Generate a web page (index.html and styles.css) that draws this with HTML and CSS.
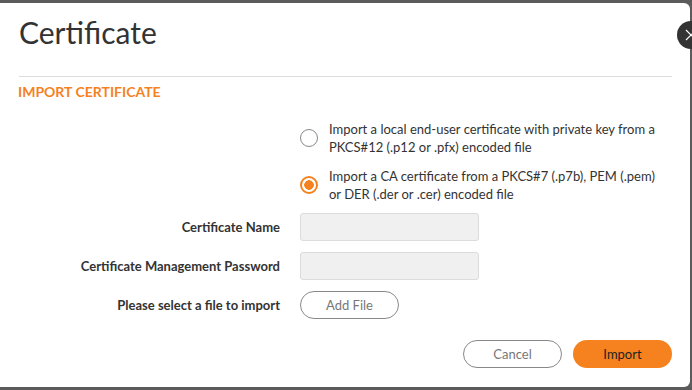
FILE: index.html
```html
<!DOCTYPE html>
<html lang="en">
<head>
    <meta charset="UTF-8" />
    <meta name="viewport" content="width=device-width, initial-scale=1.0" />
    <title>Certificate</title>
    <link rel="stylesheet" href="styles.css">
</head>
<body>
    <div class="modal">
        <button class="close-btn" aria-label="Close">
            <svg width="28" height="28" viewBox="0 0 28 28">
                <path d="M9 9 L19 19 M19 9 L9 19" stroke="#fff" stroke-width="1.2" fill="none" />
            </svg>
        </button>

        <div class="modal-header">
            <h1 class="title">Certificate</h1>
        </div>

        <div class="section-title">IMPORT CERTIFICATE</div>

        <div class="form">
            <div class="label"></div>
            <div class="options">
                <label class="option">
                    <span class="radio"></span>
                    <span class="option-text">Import a local end-user certificate with private key from a PKCS#12 (.p12 or .pfx) encoded file</span>
                </label>
                <label class="option">
                    <span class="radio checked"></span>
                    <span class="option-text">Import a CA certificate from a PKCS#7 (.p7b), PEM (.pem) or DER (.der or .cer) encoded file</span>
                </label>
            </div>

            <div class="label">Certificate Name</div>
            <div><input class="field" type="text" /></div>

            <div class="label">Certificate Management Password</div>
            <div><input class="field" type="password" /></div>

            <div class="label">Please select a file to import</div>
            <div><button class="btn-outline add-file">Add File</button></div>
        </div>

        <div class="modal-footer">
            <button class="btn-outline">Cancel</button>
            <button class="btn-primary">Import</button>
        </div>
    </div>
</body>
</html>
```

FILE: styles.css
```css
body {
    margin: 0;
    background-color: #5b5b5b;
    font-family: Lato, "Open Sans", Arial, sans-serif;
    color: #333;
    overflow: hidden;
}

.modal {
    position: relative;
    width: 690px;
    height: 384px;
    margin-top: 3px;
    background: white;
    border-radius: 0 6px 6px 0;
}

.close-btn {
    position: absolute;
    top: 18px;
    left: 677px;
    width: 28px;
    height: 28px;
    padding: 0;
    border: none;
    border-radius: 50%;
    background-color: #333;
    cursor: pointer;
}

    .close-btn svg {
        display: block;
    }

.modal-header {
    padding: 10px 19px 0 19px;
}

.title {
    margin: 0;
    font-size: 30px;
    font-weight: 400;
    line-height: 38px;
    color: #333;
    padding-bottom: 25px;
    border-bottom: 1px solid #dcdcdc;
    width: 653px;
}

.section-title {
    margin: 7px 0 0 18px;
    font-size: 14px;
    font-weight: 700;
    color: #f5821f;
    line-height: 16px;
}

.form {
    display: grid;
    grid-template-columns: 280px 1fr;
    column-gap: 20px;
    row-gap: 11px;
    align-items: center;
    margin-top: 20px;
}

.label {
    text-align: right;
    font-size: 13px;
    font-weight: 700;
    color: #333;
}

.options {
    display: flex;
    flex-direction: column;
    gap: 11px;
    margin-bottom: -1px;
}

.option {
    display: flex;
    align-items: center;
    gap: 11px;
    font-size: 13px;
    line-height: 18px;
    color: #333;
    cursor: pointer;
}

.option-text {
    width: 334px;
}

.radio {
    flex: none;
    width: 18px;
    height: 18px;
    border: 1px solid #888;
    border-radius: 50%;
    box-sizing: border-box;
    background: white;
}

    .radio.checked {
        border: 2px solid #f5821f;
        background: radial-gradient(circle, #f5821f 0 4.5px, white 5px);
    }

.field {
    display: block;
    width: 179px;
    height: 28px;
    box-sizing: border-box;
    background-color: #f0f0f0;
    border: 1px solid #dcdcdc;
    border-radius: 3px;
}

.btn-outline {
    height: 28px;
    width: 99px;
    border: 1px solid #888;
    border-radius: 14px;
    background: white;
    color: #777;
    font-family: inherit;
    font-size: 13px;
    cursor: pointer;
}

.modal-footer {
    display: flex;
    justify-content: flex-end;
    gap: 11px;
    padding: 21px 18px 0 0;
}

.btn-primary {
    height: 28px;
    width: 99px;
    border: none;
    border-radius: 14px;
    background-color: #f5821f;
    color: #222;
    font-family: inherit;
    font-size: 13px;
    cursor: pointer;
}
```
